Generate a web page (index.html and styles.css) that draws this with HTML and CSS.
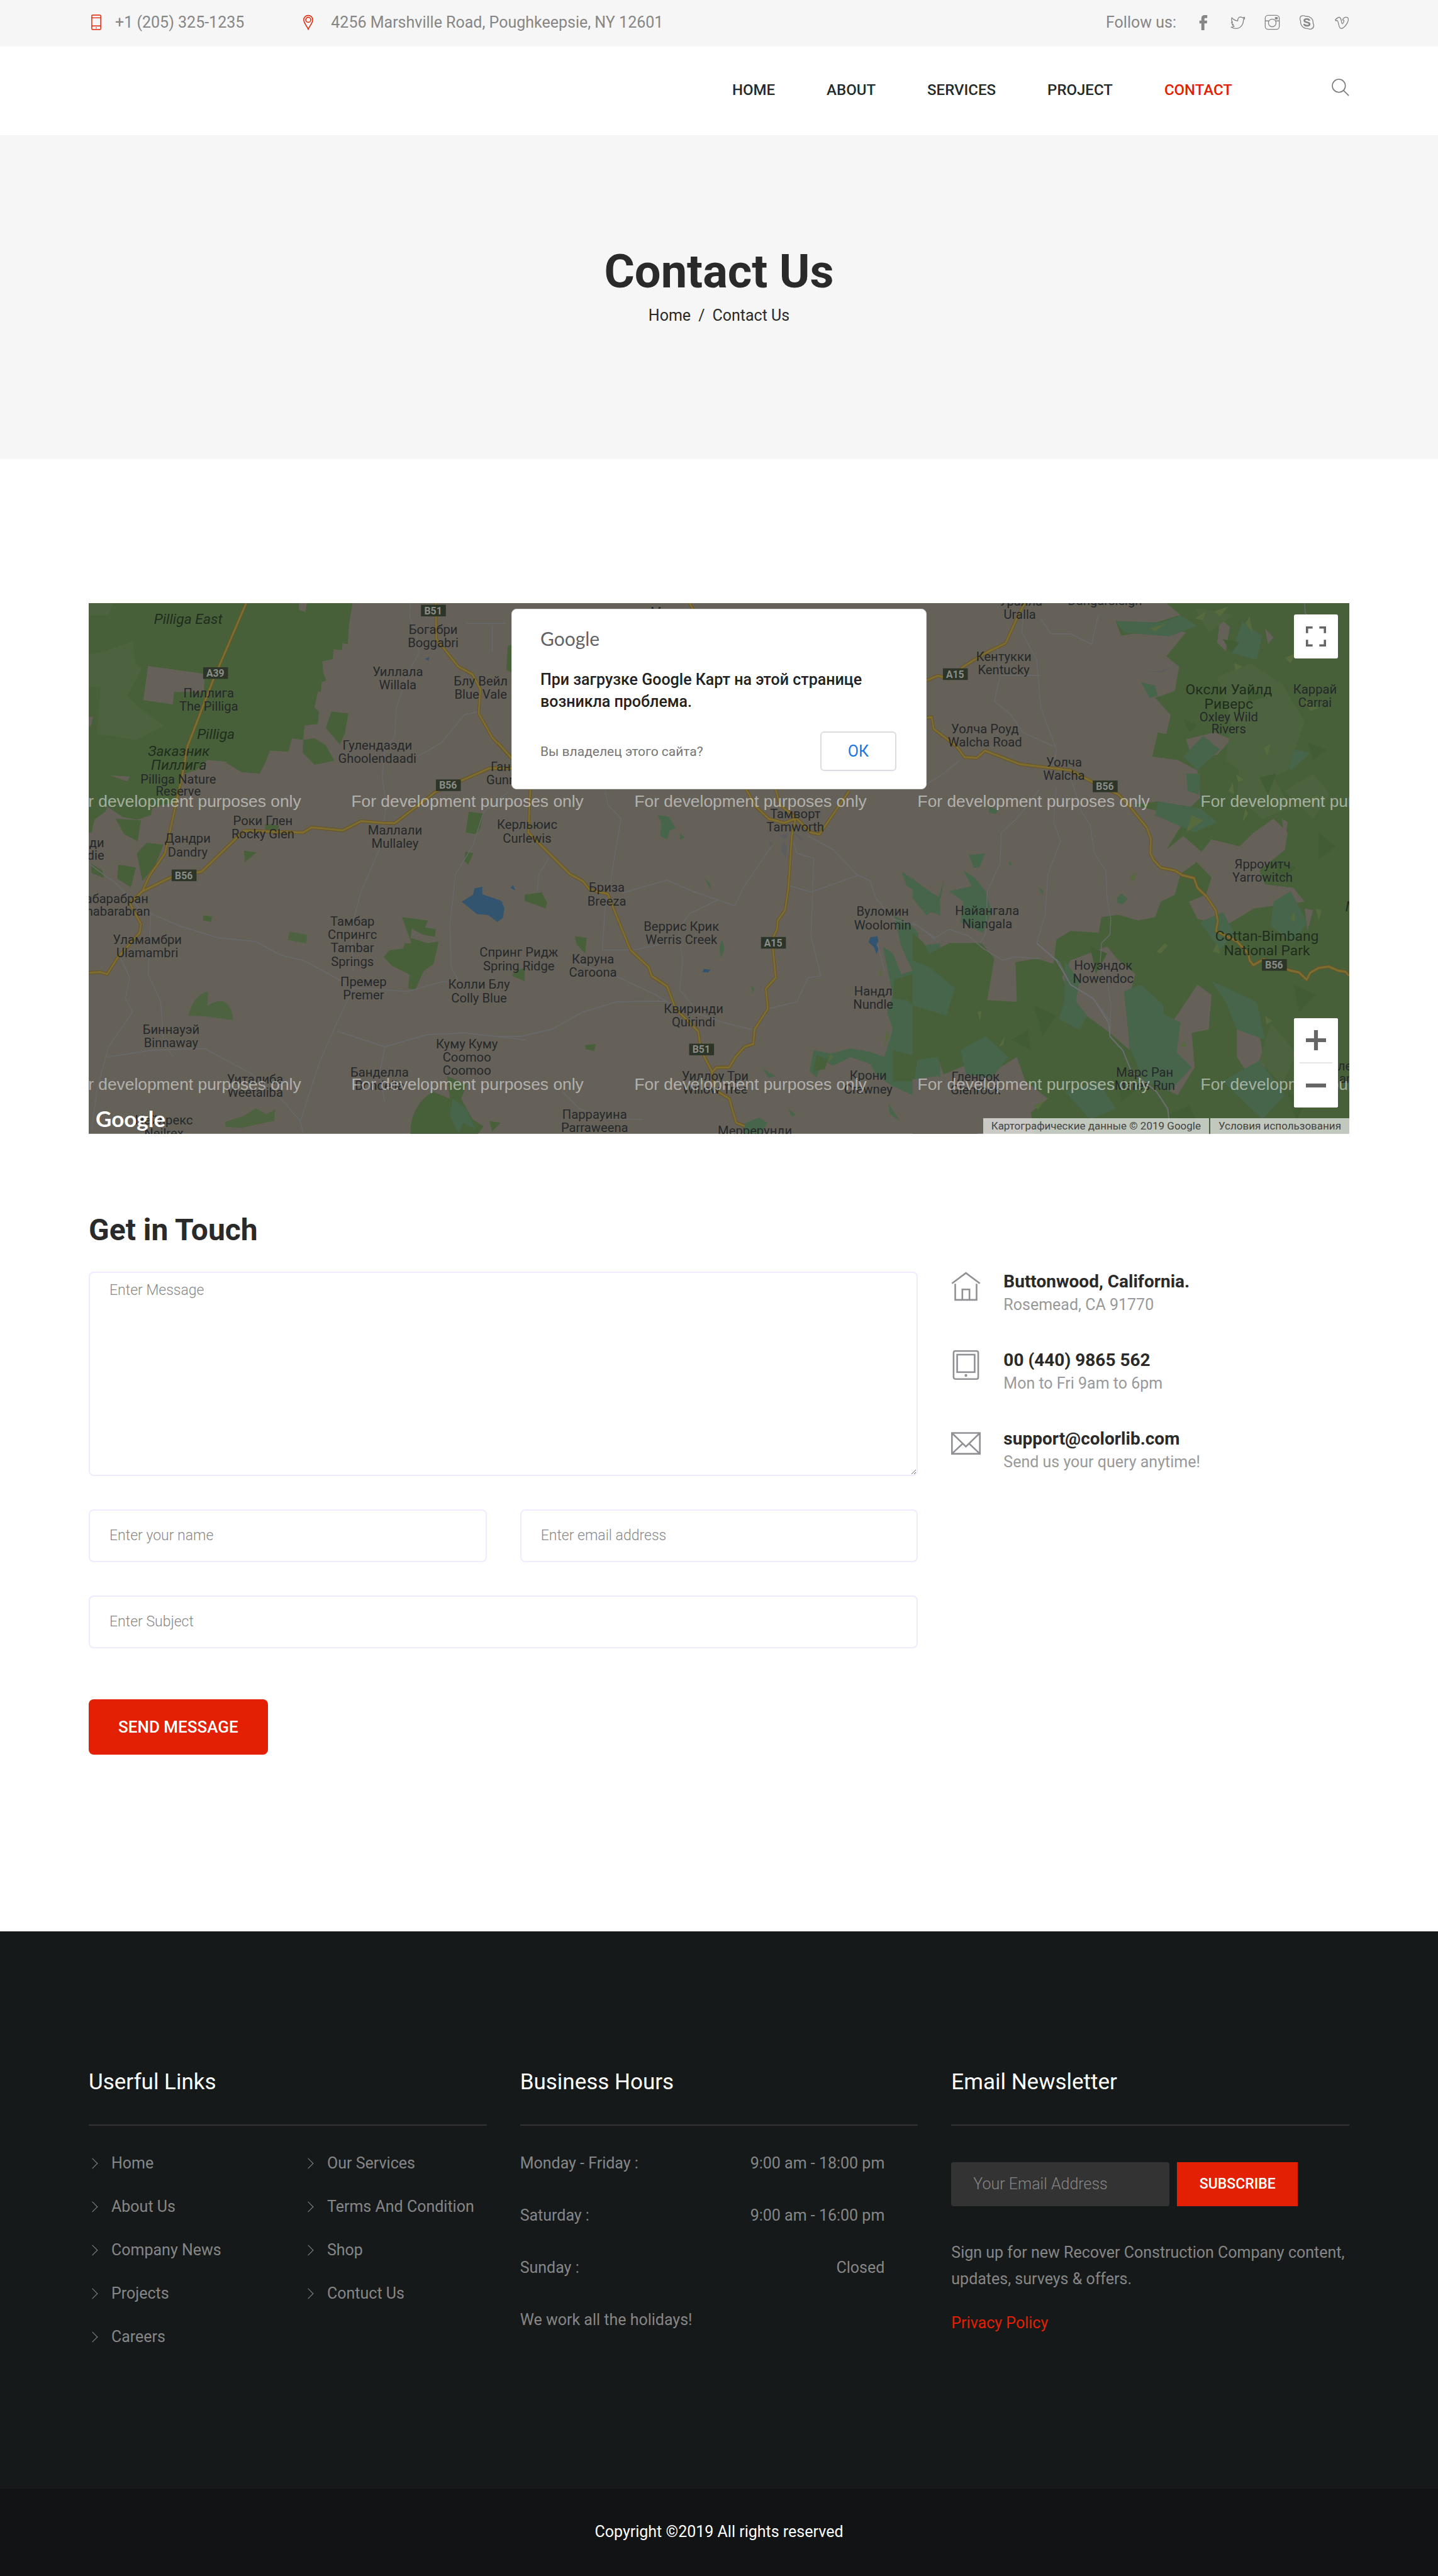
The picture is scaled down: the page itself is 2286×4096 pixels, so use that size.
FILE: index.html
```html
<!DOCTYPE html>
<html lang="en">
<head>
<meta charset="utf-8">
<meta name="viewport" content="width=device-width, initial-scale=1">
<title>Contact Us</title>
<link rel="stylesheet" href="styles.css">
</head>
<body>
<header>
  <div class="topbar container">
    <div class="topbar-item">
      <svg class="icon-phone" viewBox="0 0 18 28" fill="none" stroke="currentColor" stroke-width="1.6"><rect x="1" y="1" width="16" height="26" rx="1.5"/><path d="M1 6h16M1 20.500h16M8 24h2"/></svg>
      <span>+1 (205) 325-1235</span>
    </div>
    <div class="topbar-item topbar-address">
      <svg class="icon-pin" viewBox="0 0 18 28" fill="none" stroke="currentColor" stroke-width="1.7"><path d="M9 26.500C7 21 1 15.500 1 9.500a8 8 0 0 1 16 0c0 6-6 11.500-8 17z"/><circle cx="9" cy="9.500" r="4.500"/></svg>
      <span>4256 Marshville Road, Poughkeepsie, NY 12601</span>
    </div>
    <div class="social">
      <span>Follow us:</span>
      <a href="#" aria-label="Facebook"><svg viewBox="0 0 28 28" fill="currentColor"><path d="M11 28V16H7.500v-5H11V8c0-4.500 1.500-7 6-7h4.500v5.500H18c-1.300 0-1.600.6-1.600 1.800V11h5l-.5 5h-4.500v12z"/></svg></a>
      <a href="#" aria-label="Twitter"><svg viewBox="0 0 28 28" fill="none" stroke="currentColor" stroke-width="1.500" stroke-linejoin="round"><path d="M2.500 22.500c2.500 0 4-.4 5.500-1.500-2-.3-3-1.200-3.600-3h2C4.500 17 3.300 15.700 3 13.500l2 .3C3.200 11.500 2.600 9 3.600 5.800 6.500 9 9.500 11 14.200 11.300 13.700 7.500 16 4.500 19 4.500c1.800 0 3 .6 4 1.600l3.500-1.200-1.800 2.600 1.800-.3-2.200 2.300C24.300 19 18.500 25 10.500 25 7.500 25 5 24.500 2.500 22.500z"/></svg></a>
      <a href="#" aria-label="Instagram"><svg viewBox="0 0 28 28" fill="none" stroke="currentColor" stroke-width="1.500"><rect x="1.500" y="1.500" width="25" height="25" rx="5"/><circle cx="14" cy="15" r="6.800"/><path d="M1.500 11.500h6.500M20 11.500h6.500"/><rect x="19.500" y="5.500" width="3.500" height="2.500" fill="currentColor"/></svg></a>
      <a href="#" aria-label="Skype"><svg viewBox="0 0 28 28" fill="none" stroke="currentColor"><path stroke-width="1.500" d="M12 3.500C7 1 2 2 1.700 7.500c0 2 .6 3 1.300 4C2 19 7.500 25.500 15.500 25c5 2.500 10.500.5 10.800-5 0-2-.5-3.200-1.300-4.500C26 8 19.500 2.500 12 3.500z"/><path stroke-width="3" d="M18.800 11c-.6-2-2.300-2.900-4.800-2.900-2.700 0-4.500 1-4.500 2.900 0 4 9.500 2 9.500 6 0 2-2.200 3-5 3-2.700 0-4.600-1-5.200-3"/></svg></a>
      <a href="#" aria-label="Vimeo"><svg viewBox="0 0 28 28" fill="none" stroke="currentColor" stroke-width="1.500" stroke-linejoin="round"><path d="M3 9.500C5 7.500 7.500 5 10 5c3 0 3.300 3.500 4 7.500.5 2.500.8 4 1.500 4 1 0 3-3.500 3-5.300 0-1.500-1.300-1.500-2.500-1.200C17.300 6.500 20 4.700 23 5c3 .2 3.800 2.500 3 6C25 16 18.500 25 13.500 25 8.500 25 9.500 13 6.500 10.700c-.8-.2-1.500.5-2 .8z"/></svg></a>
    </div>
  </div>
  <div class="navbar container">
    <nav>
      <a href="#">Home</a>
      <a href="#">About</a>
      <a href="#">Services</a>
      <a href="#">Project</a>
      <a href="#" class="active">Contact</a>
    </nav>
    <button class="search" type="button" aria-label="Search"><svg viewBox="0 0 32 32" fill="none" stroke="currentColor" stroke-width="1.800"><circle cx="13" cy="13" r="11.800"/><path d="M21.300 21.300L31 31"/></svg></button>
  </div>
</header>

<section class="hero">
  <h1>Contact Us</h1>
  <div class="crumbs"><a href="#">Home</a><span>/</span><span>Contact Us</span></div>
</section>

<main class="container">
  <div class="map">
    <svg class="map-canvas" viewBox="0 0 2280 960">
      <rect class="land" width="2280" height="960"/>
      <g transform="translate(-10 -10) scale(.5102 .625)">
        <path class="park" d="M20 16H955L942 80 938 135 920 132 917 152 888 150 885 178 848 185 850 215 862 240 845 245 843 272 832 272 820 318 836 330 832 366 785 370 780 412 740 408 728 446 662 443 645 480 625 510 562 505 500 475 440 470 400 500 350 512 345 560 330 595 280 600 245 610 240 630 190 643 140 635 85 605 78 620 20 655z"/>
        <path class="land" d="M230 198L430 221 428 273 322 273 318 309 213 297zM20 345h15l-8 28h-7zM440 470l70 5-30 38-70-10zM95 515l70 3-8 14zM765 16h28l-5 25-22-5z"/>
        <path class="park-light" d="M20 16h85L92 50 20 53zM75 155L175 128 186 192 210 205 155 285 205 322 285 372 190 412 50 395 60 260 20 257V165z"/>
        <path class="park" d="M115 640l90 5-12 60-48-20zM225 710l60 5-30 60-45 45-20-80zM125 773l62 8-18 58-48-25zM28 770l40 20 6 22-45-15zM880 330l60 5-13 60-17 30-50-47zM780 412l40-5 40 20 30 45-70 12-42-35zM20 600l30 5-20 75H20zM1367 620l52 5-10 40-15 20-38-5zM1355 735l28 5-18 33-14-10zM1510 140l10-3v80l-20-8zM425 920l32 3-4 16-28-5zM570 733l45 5-42 28zM645 655l50 5-10 25-40-15zM1130 925l92 10-10 20 38 5-3 22-42-6-40-18-5 27 60 15 40-4-18 65-35 20-30 55-25-5 5-40-62-25-30-25 20-20 50-5 4-15h25z"/>
        <path class="park-light" d="M373 1210Q390 1150 443 1140L440 1182Q520 1140 532 1223L430 1212zM503 1518L570 1500 612 1478 650 1495 680 1482 678 1515 655 1518 560 1535 505 1532zM732 967l62 9-3 25-66-10z"/>
        <path class="park" d="M1160 1552Q1160 1470 1240 1430L1300 1450 1290 1385 1360 1410 1340 1450 1380 1510 1420 1530 1400 1552zM1440 1515l40 5-30 25zM1520 1090l45-20v40z"/>
        <path class="teal" d="M1310 1450l50 30 30 60-40-20-20 30-30-50z"/>
        <path class="water" d="M1342 880l40-20 5-18 28-5v22l65 18 13 20-5 30-20 12-32-20-40-3zM1515 840l8-8 8 15zM1212 178l15-6-3 10z"/>
        <path class="minor" d="M1160 16L1158 60 1180 100 1190 160 1150 220 1110 320 1105 400 1070 440 1060 520 1075 600 1050 730 985 850 950 960 958 1080M20 770L120 830 200 900 340 950 480 985 610 995 700 1035 780 1050 860 1085 960 1130 1150 1140 1280 1110 1340 1125M240 910L230 1090 275 1170 285 1290 320 1330M130 1040L165 1100 150 1160 175 1200 90 1300 50 1420 30 1540M85 1330L240 1310 430 1305 600 1380 700 1450 770 1515 840 1340 900 1230 958 1130M1510 560L1420 620 1380 720 1320 800 1300 950 1305 1070 1330 1110M900 1255L1070 1300 1220 1265 1350 1260 1568 1280M1070 1300L1050 1380 1070 1460M770 1515L780 1552M1185 460L1270 420 1350 340 1400 330M1360 75H1500M1450 80V160"/>
        <g class="road-edge"><path id="r1" d="M578 16L460 240 370 430 350 520 320 630 290 740 235 805 210 850 165 885 205 945 200 970 120 1045 85 1090 60 1084 20 1086"/><path id="r2" d="M210 850L310 810 420 793 570 675 780 680 810 665 920 674 985 647 1060 652 1105 653 1250 562 1440 494H1520"/><path id="r3" d="M1250 16L1252 120 1330 200 1380 222 1408 265 1402 335 1450 405 1520 466"/></g>
        <g class="road"><use href="#r1"/><use href="#r2"/><use href="#r3"/></g>
      </g>
      <g transform="translate(740 -10) scale(.5102 .625)">
        <path class="park" d="M95 860l60-7 20 30-5 17-75-22zM272 980l43 5-5 45-30-25zM310 1295l37-3-5 20-32-5zM50 1095l20-20 25 5v30zM35 140l15-3v75l-20-5z"/>
        <path class="teal" d="M565 630l40 3 25 35-20 5-10 27-25-10 5-40zM645 680l17 15-15 5zM733 812l18 15 5 20zM785 1015l10-25 8 25-12 28zM897 1125l12 5-5 15zM890 1045l20 18zM940 1365l45 20-25 5zM865 1525l60-20 30 15-20 32h-60zM1030 1480l28 18-18 3z"/>
        <path class="teal" d="M1430 792L1505 835 1568 870V920L1520 905 1505 860 1450 835zM1405 920L1460 945 1490 970 1490 1010 1568 1000V1480L1530 1500 1480 1480 1470 1440 1390 1410 1340 1380 1320 1350 1250 1330 1190 1355 1150 1340 1130 1390 1105 1370 1120 1310 1180 1320 1250 1305 1320 1315 1370 1330 1400 1250 1380 1200 1400 1150 1365 1010 1400 1030 1430 1090 1470 1080 1430 1010zM1385 1465l40 50-35-20z"/>
        <path class="park" d="M1405 1105L1470 1090 1490 1035 1568 1030V1210L1500 1200 1450 1165 1400 1160zM1400 1310L1490 1330 1475 1400 1400 1400zM1130 1325l40 10-10 30-40 5z"/>
        <path class="olive" d="M1380 1250l8 20-20 30zM1180 1320l10 10-20 15zM1355 1070l8 20-10 5z"/>
        <path class="water" d="M1320 983l25-3 5 15-8 10 8 12-8 15-8-20-20-15zM730 1075l25 2-10 8-20-1zM1338 1097l10 10zM0 875l15 5 6 25-8 20-13 10zM45 840l10-6 6 12z"/>
        <path class="urban" d="M962 705l12 3-8 15zM1010 710l15 10-5 30-15-15zM1050 680l35 20-10 5zM1000 690l30-10-10 20z"/>
        <path class="minor" d="M380 560L390 600 437 640 420 720 400 820 380 900 370 1020M440 855L600 818 690 850 780 875 840 892 870 840 970 720M780 875L680 915 640 960 655 1050 645 1135 690 1180M370 1020L480 1020 600 1000M290 1060L430 1100 560 1150 620 1180 800 1230 900 1250M0 1270L80 1270 190 1250 300 1200 420 1170 600 1168M1040 690L1060 740 1120 755 1110 980 1125 1030 1145 1095 1100 1100 1060 1170 960 1190M1100 690L1190 730 1270 800 1320 820 1340 870 1400 930 1490 950 1550 990M1035 835L1110 852 1280 803M180 755L145 800 140 850M230 1430L290 1480 400 1510 510 1510M1345 1000L1370 1080"/>
        <g class="road-edge"><path id="r4" d="M0 420L50 466M115 555L108 680 255 800 300 820 325 845 390 858 410 900 470 1020 535 1070 545 1095 600 1125 630 1190 710 1255 720 1310 758 1370 770 1425 820 1450 845 1520 875 1530"/><path id="r5" d="M880 555L915 605 960 640 1015 652 1055 640 1042 690 1030 840 1018 905 992 935 990 960 972 990 985 1100 950 1132 957 1190 910 1250 906 1292 875 1300 842 1330 820 1360 775 1360 758 1375"/><path id="r6" d="M985 555L1000 600 1060 640 1110 680 1140 685 1245 560M680 16L692 34"/></g>
        <g class="road"><use href="#r4"/><use href="#r5"/><use href="#r6"/></g>
      </g>
      <g transform="translate(1490 -10) scale(.5102 .625)">
        <path class="park" d="M900 16H1548V1552H430L420 1490 480 1450 400 1400 370 1330 290 1370 200 1350 110 1380 90 1330 0 1340V970L40 1000 60 1030 130 1000 245 1000 290 1045 265 1165 370 1170 365 1055 440 1045 500 1060 510 990 560 965 660 970 670 925 730 918 800 935 860 925 880 880 930 860 950 800 1000 770 1030 740 960 690 900 730 960 650 880 620 780 600 870 590 980 610 1020 580 1010 500 940 470 850 460 870 390 900 395 915 340 860 290 880 285 930 270 945 200 900 170 970 100 890 90 740 110 720 68 850 75 950 50z"/>
        <path class="land" d="M1090 60l35 25-15 70-30-25zM1250 90l30 25-20 20zM1150 320l90-50 70 60-30 40-80-10zM970 410l100-20 60 20-50 45-90 10zM1280 640l50 40-10 50-90 60 20 40 100 10 40 40-180 20-100 50-100-20-30-50 60-20 20-50-60-50 60-60 100 20 50-40zM560 1050l130-40 40 40 60 40-30 90 10 130-70-50-100-60-70-100zM1010 1120l50 30-10 100-60 10 10 100-60 80-50-20 30-80 0-110zM1150 1230l80 30 20 110-60 10-40-50zM0 1395l90-10 70 40 130-30 80 50-80 50-60 57H0zM1310 640l20 10-10 60zM1390 900l30 5-20 60z"/>
        <path class="teal" d="M720 68l160 4 70-20 60 30-100 30-160-10zM810 245l50 10 10 30-30 5zM870 590l150 20 60 40-80 30-140-50zM970 510l50 0-5 60-40-10zM0 810L40 850 100 870 110 820 80 900 50 920 0 870zM180 790l40 20 40 40 20 60-30 60-80-30 10-60-50-30 80-15zM200 745l58-5-20 40-20 3zM725 870l15-14 22 15-15 17-22-5zM340 770l8-7 6 15zM447 840l17 8-3 12zM272 605l28 10-2 12-27-5zM540 1050l50 60-10 60 40 40-30 40-70-30 20-60zM750 1140l60-20 80 60 0 100 100 80-80 70-90-30-50-100zM1060 1110l160 60 30 110-100-30-40-80zM1280 880l60-30 60 90-50 60-80-50zM880 1200l70 30-20 130-60-30zM0 1050l60 20 90 60-30 80-120-30zM170 1310l90-40 80 60-60 60-90-10zM1170 70l70 40-20 70-90-20zM1190 330l90-60 60 60-90 50zM960 460l70-60 60 40-80 60zM1020 940l80-30 40 60-50 50zM1100 1400l130-60 90 100-80 70zM540 1430l120-30 60 80-90 30zM1300 430l110 20-70 50z"/>
        <path class="park-light" d="M1080 230l120-40 110 60 80 110-60 140-110 40-110-70 20-110zM1160 480l120 40 60 90-100 30-90-60zM1320 560l100-50 60 60-60 70zM1000 30l140 20-90 50zM1270 1230l90 90-50 90-80-70z"/>
        <path class="olive" d="M1000 60l40-20-10 25zM1140 190l30 10-25 10zM1180 75l15-20 10 45zM1245 435l25-12-12 35zM1145 510l30 18-20 5zM1320 175l40-15-20 30zM990 630l40 15-60 35zM1180 610l10 15-20 25zM865 1025l30-25 10 8-25 22zM230 1200l15-5-5 30zM305 1300l22-30-5 25zM770 810l25-15-10 25zM1430 900l20 5-10 30zM1120 560l15-25 5 35zM1070 40l50-15-30 30zM840 90l60-15-40 22zM1390 300l50 20-30 8zM1250 1210l25 15-20 10zM1080 1000l-15 25 25 5zM950 1300l15-20 5 20zM430 1470l35-12-20 25zM1340 930l15-25 0 35zM1400 590l40-20-20 35z"/>
        <path class="shade" d="M1100 120l60 10-30 30zM1190 250l60 40-60 10zM1400 420l70 20-50 30zM1350 1120l80 30-60 50zM1440 1250l70 60-60 20zM630 1010l60 20-40 60zM430 1180l80 30-50 60zM730 1400l70 20-60 40zM1280 760l80 20-50 40zM1440 680l60 40-60 40zM350 1280l60-30 10 60zM900 1500l80-30 30 50zM1330 1430l60 30-30 60zM1230 520l60-10-30 60zM960 350l50 20-30 20z"/>
        <path class="urban" d="M808 210l62 5 50-15-40 18z"/>
        <path class="minor" d="M395 16L388 100 440 180 455 320 510 440 500 490 560 520 600 620 630 660 645 740 685 790 690 870 703 930 700 975 670 1000 665 1060 690 1110 703 1180 700 1270M300 130L310 230 290 300 350 340 390 390 500 430M315 225H450M455 60L490 105 560 105 635 135 658 50M510 550L500 650 525 705 480 800 470 920 440 1000 520 1055 560 1120 640 1160 700 1225M450 555L370 640 315 680 310 770 265 850 260 970 240 1000M0 940L80 985 130 960 200 980 250 1015 320 1050 360 1040 450 1045M50 540L100 515 170 470M1390 16L1392 45 1430 70"/>
        <path class="minor strong" d="M440 1000L510 1050 560 1120 640 1160 695 1230 700 1270 745 1310 775 1370 865 1430 905 1480 910 1520"/>
        <g class="road-edge"><path id="r7" d="M50 240L90 226 130 235 180 200 260 160 330 132 370 60 398 16M50 348L68 346 75 380 155 430 185 462 228 464 257 443 380 482 560 500 640 535 730 570 775 610 830 665 845 698 843 740 855 760 880 782 930 790 955 803 998 812 1010 840 1042 865 1075 905 1082 935 1076 965 1150 995 1190 1030 1195 1050 1208 1064 1245 1047 1340 1080 1370 1085 1397 1106 1410 1086 1440 1072 1475 1068 1510 1080 1535 1083 1548 1095"/></g>
        <g class="road"><use href="#r7"/></g>
      </g>
      <g class="shield">
        <rect x="207" y="116" width="45" height="21"/><rect x="628" y="319" width="45" height="21"/><rect x="150" y="482" width="45" height="21"/><rect x="601" y="3" width="45" height="21"/><rect x="1216" y="604" width="45" height="21"/><rect x="1086" y="797" width="45" height="21"/><rect x="1545" y="118" width="45" height="21"/><rect x="1816" y="321" width="45" height="21"/><rect x="2122" y="644" width="45" height="21"/>
        <text x="229" y="133">A39</text><text x="650" y="336">B56</text><text x="172" y="499">B56</text><text x="623" y="20">B51</text><text x="1238" y="621">A15</text><text x="1108" y="814">B51</text><text x="1567" y="135">A15</text><text x="1838" y="338">B56</text><text x="2144" y="661">B56</text>
      </g>
      <g class="place">
        <text x="217" y="171">Пиллига</text><text x="217" y="195">The Pilliga</text>
        <text x="162" y="326">Pilliga Nature</text><text x="162" y="348">Reserve</text>
        <text x="623" y="56">Богабри</text><text x="623" y="80">Boggabri</text>
        <text x="559" y="132">Уиллала</text><text x="559" y="156">Willala</text>
        <text x="709" y="149">Блу Вейл</text><text x="709" y="173">Blue Vale</text>
        <text x="522" y="265">Гулендаэди</text><text x="522" y="289">Ghoolendaadi</text>
        <text x="771" y="304">Ганнеда</text><text x="771" y="328">Gunnedah</text>
        <text x="315" y="402">Роки Глен</text><text x="315" y="426">Rocky Glen</text>
        <text x="554" y="419">Маллали</text><text x="554" y="443">Mullaley</text>
        <text x="793" y="409">Керльюис</text><text x="793" y="433">Curlewis</text>
        <text x="179" y="434">Дандри</text><text x="179" y="458">Dandry</text>
        <text class="end" x="28" y="442">ди</text><text class="end" x="28" y="464">die</text>
        <text class="end" x="108" y="543">абарабран</text><text class="end" x="111" y="566">nabarabran</text>
        <text x="106" y="617">Уламамбри</text><text x="106" y="641">Ulamambri</text>
        <text x="477" y="584">Тамбар</text><text x="477" y="608">Спрингс</text><text x="477" y="632">Tambar</text><text x="477" y="656">Springs</text>
        <text x="497" y="693">Премер</text><text x="497" y="717">Premer</text>
        <text x="706" y="698">Колли Блу</text><text x="706" y="722">Colly Blue</text>
        <text x="778" y="639">Спринг Ридж</text><text x="778" y="664">Spring Ridge</text>
        <text x="149" y="779">Биннауэй</text><text x="149" y="803">Binnaway</text>
        <text x="684" y="805">Куму Куму</text><text x="684" y="829">Coomoo</text><text x="684" y="853">Coomoo</text>
        <text x="526" y="857">Банделла</text><text x="526" y="881">Bondella</text>
        <text x="301" y="869">Уиталиба</text><text x="301" y="893">Weetaliba</text>
        <text x="136" y="943">Нейлрекс</text><text x="136" y="967">Neilrex</text>
        <text x="1065" y="24">Манилла</text>
        <text x="937" y="522">Бриза</text><text x="937" y="547">Breeza</text>
        <text x="1072" y="593">Веррис Крик</text><text x="1072" y="617">Werris Creek</text>
        <text x="912" y="652">Каруна</text><text x="912" y="676">Caroona</text>
        <text x="1094" y="742">Квиринди</text><text x="1094" y="766">Quirindi</text>
        <text x="1133" y="864">Уиллоу Три</text><text x="1133" y="888">Willow Tree</text>
        <text x="915" y="933">Паррауина</text><text x="915" y="957">Parraweena</text>
        <text x="1205" y="962">Меррерунди</text>
        <text x="1278" y="389">Тамворт</text><text x="1278" y="413">Tamworth</text>
        <text x="1436" y="566">Вуломин</text><text x="1436" y="590">Woolomin</text>
        <text x="1419" y="710">Нандл</text><text x="1419" y="734">Nundle</text>
        <text x="1410" y="862">Крони</text><text x="1410" y="887">Crawney</text>
        <text x="1686" y="5">Уралла</text><text x="1684" y="29">Uralla</text><text x="1838" y="3">Dangarsleigh</text>
        <text x="1655" y="105">Кентукки</text><text x="1655" y="129">Kentucky</text>
        <text x="1621" y="235">Уолча Роуд</text><text x="1621" y="259">Walcha Road</text>
        <text x="1764" y="296">Уолча</text><text x="1764" y="320">Walcha</text>
        <text x="2062" y="214">Oxley Wild</text><text x="2062" y="236">Rivers</text>
        <text x="2218" y="164">Каррай</text><text x="2218" y="188">Carrai</text>
        <text x="2123" y="480">Ярроуитч</text><text x="2123" y="504">Yarrowitch</text>
        <text x="1625" y="564">Найангала</text><text x="1625" y="588">Niangala</text>
        <text x="1835" y="663">Ноуэндок</text><text x="1835" y="687">Nowendoc</text>
        <text x="1910" y="857">Марс Ран</text><text x="1910" y="881">Mares Run</text>
        <text x="1604" y="865">Гленрок</text><text x="1604" y="889">Glenrock</text>
        <text x="2272" y="845">ле</text><text x="2272" y="868">ar</text>
      </g>
      <g class="reserve">
        <text x="2062" y="165">Оксли Уайлд</text><text x="2062" y="191">Риверс</text>
        <text x="2131" y="611">Cottan-Bimbang</text><text x="2131" y="637">National Park</text>
        <g class="slanted"><text x="180" y="37">Pilliga East</text><text x="230" y="246">Pilliga</text><text x="163" y="277">Заказник</text><text x="163" y="302">Пиллига</text><text x="2284" y="557">M</text></g>
      </g>
      <g class="watermark">
        <text x="-36" y="369">For development purposes only</text><text x="475" y="369">For development purposes only</text><text x="987" y="369">For development purposes only</text><text x="1499" y="369">For development purposes only</text><text x="2011" y="369">For development purposes only</text>
        <text x="-36" y="881">For development purposes only</text><text x="475" y="881">For development purposes only</text><text x="987" y="881">For development purposes only</text><text x="1499" y="881">For development purposes only</text><text x="2011" y="881">For development purposes only</text>
      </g>
    </svg>
    <div class="map-dialog" role="dialog" aria-label="Google">
      <div class="dialog-logo">Google</div>
      <p>При загрузке Google Карт на этой странице возникла проблема.</p>
      <div class="dialog-actions"><a href="#">Вы владелец этого сайта?</a><button type="button">ОК</button></div>
    </div>
    <button class="map-control fullscreen" type="button" aria-label="Fullscreen"><svg viewBox="0 0 36 36" fill="none" stroke="currentColor" stroke-width="4"><path d="M2 12V2h10M24 2h10v10M34 24v10H24M12 34H2V24"/></svg></button>
    <div class="zoom">
      <button class="map-control" type="button" aria-label="Zoom in"><svg viewBox="0 0 36 36" fill="none" stroke="currentColor" stroke-width="7"><path d="M18 0v36M0 18h36"/></svg></button>
      <button class="map-control" type="button" aria-label="Zoom out"><svg viewBox="0 0 36 36" fill="none" stroke="currentColor" stroke-width="7"><path d="M0 18h36"/></svg></button>
    </div>
    <div class="map-logo">Google</div>
    <div class="map-terms"><span>Картографические данные © 2019 Google</span><a href="#">Условия использования</a></div>
  </div>

  <h2>Get in Touch</h2>
  <div class="contact">
    <form class="contact-form">
      <textarea class="field" placeholder="Enter Message" aria-label="Message"></textarea>
      <div class="field-row">
        <input class="field" type="text" placeholder="Enter your name" aria-label="Name">
        <input class="field" type="email" placeholder="Enter email address" aria-label="Email address">
      </div>
      <input class="field" type="text" placeholder="Enter Subject" aria-label="Subject">
      <button class="send" type="submit">SEND MESSAGE</button>
    </form>
    <div class="info">
      <div class="info-item">
        <svg viewBox="0 0 54 54" fill="none" stroke="currentColor" stroke-width="3"><path d="M1.500 21.500L27 2.500l25.500 19M7.500 22v29.500h39V22M20.500 51.500v-19h13v19"/></svg>
        <div><h3>Buttonwood, California.</h3><p>Rosemead, CA 91770</p></div>
      </div>
      <div class="info-item">
        <svg viewBox="0 0 54 54" fill="none" stroke="currentColor" stroke-width="3"><rect x="4.500" y="1.500" width="45" height="51" rx="3"/><rect x="11" y="8" width="32" height="32"/><circle cx="27" cy="46" r="1.500" fill="currentColor" stroke-width="2"/></svg>
        <div><h3>00 (440) 9865 562</h3><p>Mon to Fri 9am to 6pm</p></div>
      </div>
      <div class="info-item">
        <svg viewBox="0 0 54 54" fill="none" stroke="currentColor" stroke-width="3"><path d="M1.500 7.500h51v38h-51zM2 8l25 24.500L52 8M2 45l19-18M52 45L33 27"/></svg>
        <div><h3>support@colorlib.com</h3><p>Send us your query anytime!</p></div>
      </div>
    </div>
  </div>
</main>

<footer>
  <div class="footer-columns container">
    <section>
      <h4>Userful Links</h4>
      <div class="links">
        <ul><li><a href="#">Home</a></li><li><a href="#">About Us</a></li><li><a href="#">Company News</a></li><li><a href="#">Projects</a></li><li><a href="#">Careers</a></li></ul>
        <ul><li><a href="#">Our Services</a></li><li><a href="#">Terms And Condition</a></li><li><a href="#">Shop</a></li><li><a href="#">Contuct Us</a></li></ul>
      </div>
    </section>
    <section>
      <h4>Business Hours</h4>
      <div class="hours">
        <table>
          <tr><th scope="row">Monday - Friday :</th><td>9:00 am - 18:00 pm</td></tr>
          <tr><th scope="row">Saturday :</th><td>9:00 am - 16:00 pm</td></tr>
          <tr><th scope="row">Sunday :</th><td>Closed</td></tr>
        </table>
        <p>We work all the holidays!</p>
      </div>
    </section>
    <section>
      <h4>Email Newsletter</h4>
      <form class="newsletter">
        <input type="email" placeholder="Your Email Address" aria-label="Your email address">
        <button type="submit">SUBSCRIBE</button>
      </form>
      <p class="note">Sign up for new Recover Construction Company content, updates, surveys &amp; offers.</p>
      <a class="privacy" href="#">Privacy Policy</a>
    </section>
  </div>
  <div class="copyright">Copyright ©2019 All rights reserved</div>
</footer>
</body>
</html>
```
FILE: styles.css
```css
* { box-sizing: border-box; }
body { margin: 0; font-family: Roboto, "Liberation Sans", sans-serif; font-size: 25px; line-height: 38px; color: #2a2a2a; background: #fff; }
a { color: inherit; text-decoration: none; }
h1, h2, h3, h4, p, ul { margin: 0; padding: 0; }
button, input, textarea { font-family: inherit; }
button { border: 0; padding: 0; cursor: pointer; }
svg { display: block; }
.container { padding-left: 141px; padding-right: 141px; }

.topbar { display: flex; align-items: center; height: 74px; padding-bottom: 3px; background: #f6f6f6; color: #868686; }
.topbar-item { display: flex; align-items: center; gap: 22px; padding-left: 4px; }
.topbar-item svg { width: 16px; height: 25px; color: #e32003; }
.topbar-address { margin-left: 90px; gap: 28px; }
.social { display: flex; align-items: center; gap: 30px; margin-left: auto; }
.social svg { width: 25px; height: 25px; }

.navbar { display: flex; align-items: center; justify-content: flex-end; gap: 158px; height: 141px; padding-bottom: 3px; }
nav { display: flex; gap: 82px; font-size: 24px; font-weight: 500; text-transform: uppercase; color: #1f2b2e; }
nav .active { color: #e32003; }
.search { background: none; color: #777; padding-bottom: 8px; }
.search svg { width: 28px; height: 28px; }

.hero { display: flex; flex-direction: column; align-items: center; gap: 7px; height: 515px; padding-top: 173px; background: #f6f6f6; }
h1 { font-size: 74px; line-height: 88px; font-weight: 700; }
.crumbs { display: flex; gap: 12px; }

main { padding-top: 229px; padding-bottom: 281px; }
.map { position: relative; overflow: hidden; aspect-ratio: 19 / 8; }
.map-canvas { width: 100%; height: 100%; }
.land { fill: #656159; }
.park { fill: #48603a; }
.park-light { fill: #4d6340; }
.teal { fill: #47654a; }
.olive { fill: #566a3d; }
.shade { fill: #425d36; }
.water { fill: #33546f; }
.urban { fill: #5d5c5e; }
.minor, .road, .road-edge { fill: none; stroke-linejoin: round; }
.minor { stroke: #69696b; stroke-width: 3; }
.strong { stroke: #6d6e71; stroke-width: 4; }
.road-edge { stroke: #685426; stroke-width: 10; }
.road { stroke: #7d6d30; stroke-width: 6; }
.shield rect { fill: #2c3528; }
.shield text { font-size: 18px; font-weight: 700; fill: #8a8d87; text-anchor: middle; }
.place text { font-size: 23px; fill: #25282a; text-anchor: middle; }
.place .end { text-anchor: end; }
.reserve text { font-size: 26px; fill: #1f2d1d; text-anchor: middle; }
.reserve .slanted text { font-style: italic; }
.watermark text { font-family: "Liberation Sans", sans-serif; font-size: 30px; fill: rgba(255, 255, 255, .5); }

.map-dialog { position: absolute; top: 9px; left: 50%; width: 660px; margin-left: -330px; padding: 28px 47px 28px 45px; background: #fff; border: 1px solid #ddd; border-radius: 8px; }
.dialog-logo { font-family: Lato, sans-serif; font-size: 30px; line-height: 36px; color: #5f6368; }
.map-dialog p { margin-top: 30px; font-size: 25px; line-height: 35px; font-weight: 500; color: #222; }
.dialog-actions { display: flex; justify-content: space-between; align-items: center; margin-top: 30px; font-size: 21px; color: #757575; }
.dialog-actions button { width: 121px; height: 63px; font-size: 25px; color: #1a73e8; background: #fff; border: 2px solid #dadce0; border-radius: 6px; }
.map-control { display: grid; place-items: center; width: 70px; height: 70px; background: #fff; color: #666; border-radius: 3px; }
.map-control svg { width: 32px; height: 32px; }
.fullscreen { position: absolute; top: 18px; right: 18px; }
.zoom { position: absolute; right: 18px; bottom: 42px; background: #fff; border-radius: 3px; }
.zoom .map-control + .map-control::before { content: ""; position: absolute; top: 70px; left: 9px; right: 9px; height: 2px; background: #e6e6e6; }
.zoom .map-control + .map-control { margin-top: 2px; }
.map-logo { position: absolute; left: 11px; bottom: 5px; font-family: Lato, sans-serif; font-size: 35px; line-height: 40px; font-weight: 700; color: #fff; }
.map-terms { position: absolute; right: 0; bottom: 0; display: flex; gap: 2px; font-size: 17px; line-height: 25px; color: #444; }
.map-terms > * { padding: 0 13px; background: rgba(245, 245, 245, .7); }

h2 { margin-top: 125px; font-size: 48px; line-height: 56px; font-weight: 700; }
.contact { display: grid; grid-template-columns: repeat(3, 1fr); gap: 53px; margin-top: 38px; }
.contact-form { grid-column: span 2; display: flex; flex-direction: column; gap: 53px; }
.field-row { display: grid; grid-template-columns: 1fr 1fr; gap: 53px; }
.field { display: block; width: 100%; height: 84px; padding: 0 31px; font-size: 23px; font-weight: 300; border: 2px solid #f0e9ff; border-radius: 8px; background: #fff; color: #2a2a2a; }
textarea.field { height: 325px; padding-top: 14px; line-height: 27px; }
.field::placeholder { color: #888; }
.send { align-self: flex-start; height: 88px; margin-top: 28px; padding: 0 47px; font-size: 26px; font-weight: 500; color: #fff; background: #e32003; border-radius: 8px; }
.info { display: flex; flex-direction: column; gap: 51px; }
.info-item { display: flex; gap: 36px; color: #8f9195; }
.info-item svg { width: 47px; height: 47px; }
h3 { font-size: 28px; line-height: 32px; font-weight: 700; color: #2a2a2a; }
.info p { line-height: 42px; color: #999; }

footer { background: #15191a; color: #868686; }
.footer-columns { display: grid; grid-template-columns: repeat(3, 1fr); gap: 53px; height: 886px; padding-top: 219px; }
h4 { margin-bottom: 41px; padding-bottom: 46px; font-size: 35px; line-height: 42px; font-weight: 400; color: #fff; border-bottom: 2px solid #333; }
.links { display: grid; grid-template-columns: 343px 1fr; }
.links ul { display: flex; flex-direction: column; gap: 31px; list-style: none; white-space: nowrap; }
.links li { display: flex; align-items: center; gap: 24px; line-height: 38px; }
.links li::before { content: ""; width: 11px; height: 11px; border: solid #868686; border-width: 1px 1px 0 0; transform: rotate(45deg); }
.hours { padding-right: 53px; }
.hours table { width: 100%; border-collapse: collapse; }
.hours th, .hours td { padding: 0 0 45px; font-weight: 400; text-align: left; }
.hours td { text-align: right; }
.newsletter { display: flex; gap: 12px; padding-top: 17px; }
.newsletter input { width: 347px; height: 70px; padding: 0 35px; font-size: 25px; font-weight: 300; color: #ccc; background: #333; border: 0; border-radius: 4px; }
.newsletter input::placeholder { color: #868686; }
.newsletter button { width: 192px; height: 70px; font-size: 23px; font-weight: 500; color: #fff; background: #e32003; }
.note { margin-top: 53px; line-height: 42px; }
.privacy { display: block; margin-top: 28px; line-height: 42px; color: #e32003; }
.copyright { display: grid; place-items: center; height: 139px; color: #fff; background: #111315; }
```
